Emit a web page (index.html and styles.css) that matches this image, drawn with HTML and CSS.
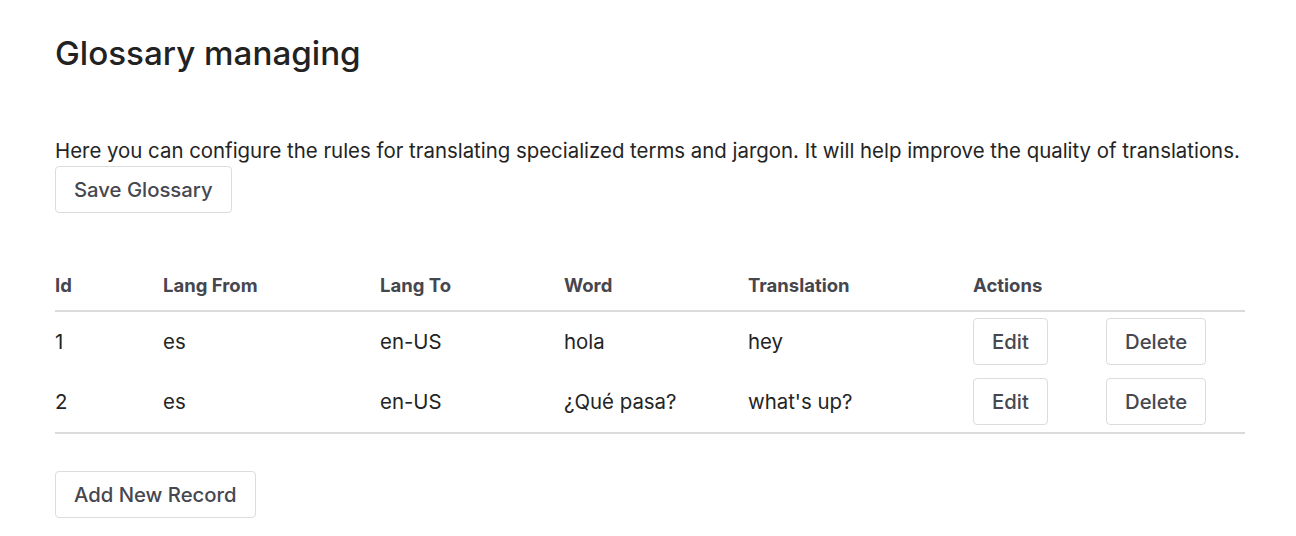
FILE: index.html
```html
<!DOCTYPE html>
<html lang="en">
<head>
<meta charset="utf-8">
<title>Glossary managing</title>
<link rel="stylesheet" href="styles.css">
</head>
<body>
<main class="page">
  <h1 class="title">Glossary managing</h1>
  <p class="intro">Here you can configure the rules for translating specialized terms and jargon. It will help improve the quality of translations.</p>
  <button class="btn">Save Glossary</button>
  <table class="grid">
    <thead>
      <tr>
        <th class="c-id">Id</th>
        <th class="c-from">Lang From</th>
        <th class="c-to">Lang To</th>
        <th class="c-word">Word</th>
        <th class="c-tr">Translation</th>
        <th class="c-act">Actions</th>
        <th class="c-del"></th>
      </tr>
    </thead>
    <tbody>
      <tr>
        <td>1</td><td>es</td><td>en-US</td><td>hola</td><td>hey</td>
        <td><button class="btn">Edit</button></td>
        <td><button class="btn">Delete</button></td>
      </tr>
      <tr>
        <td>2</td><td>es</td><td>en-US</td><td>¿Qué pasa?</td><td>what's up?</td>
        <td><button class="btn">Edit</button></td>
        <td><button class="btn">Delete</button></td>
      </tr>
    </tbody>
  </table>
  <button class="btn">Add New Record</button>
</main>
</body>
</html>
```
FILE: styles.css
```css
html, body {
  margin: 0;
  padding: 0;
  background: #fff;
}
body {
  font-family: Inter, "Liberation Sans", sans-serif;
  color: #242424;
  font-size: 20.4px;
}
.page {
  padding: 29px 51px 0 55px;
  display: flex;
  flex-direction: column;
  align-items: flex-start;
}
.title {
  margin: 0;
  font-size: 33.2px;
  font-weight: 500;
  line-height: 48px;
  color: #222;
}
.intro {
  margin: 61px 0 2px 0;
  line-height: 26px;
  white-space: nowrap;
}
.btn {
  font-family: inherit;
  font-size: 20.3px;
  font-weight: 500;
  color: #47474f;
  background: #fff;
  border: 1px solid #dcdcdc;
  border-radius: 4px;
  height: 47px;
  padding: 0 18px;
  cursor: pointer;
}
.grid {
  width: 100%;
  border-collapse: collapse;
  margin: 61px 0 37px 0;
}
.grid th {
  text-align: left;
  font-size: 18.5px;
  font-weight: 700;
  line-height: 22px;
  color: #46464e;
  padding: 0 0 14px 0;
  border-bottom: 2px solid #dbdbdb;
}
.grid td {
  padding: 6px 0;
  height: 48px;
  line-height: 48px;
}
.grid tbody tr:last-child td {
  border-bottom: 2px solid #dbdbdb;
}
.c-id { width: 108px; }
.c-from { width: 217px; }
.c-to { width: 184px; }
.c-word { width: 184px; }
.c-tr { width: 225px; }
.c-act { width: 133px; }
```
